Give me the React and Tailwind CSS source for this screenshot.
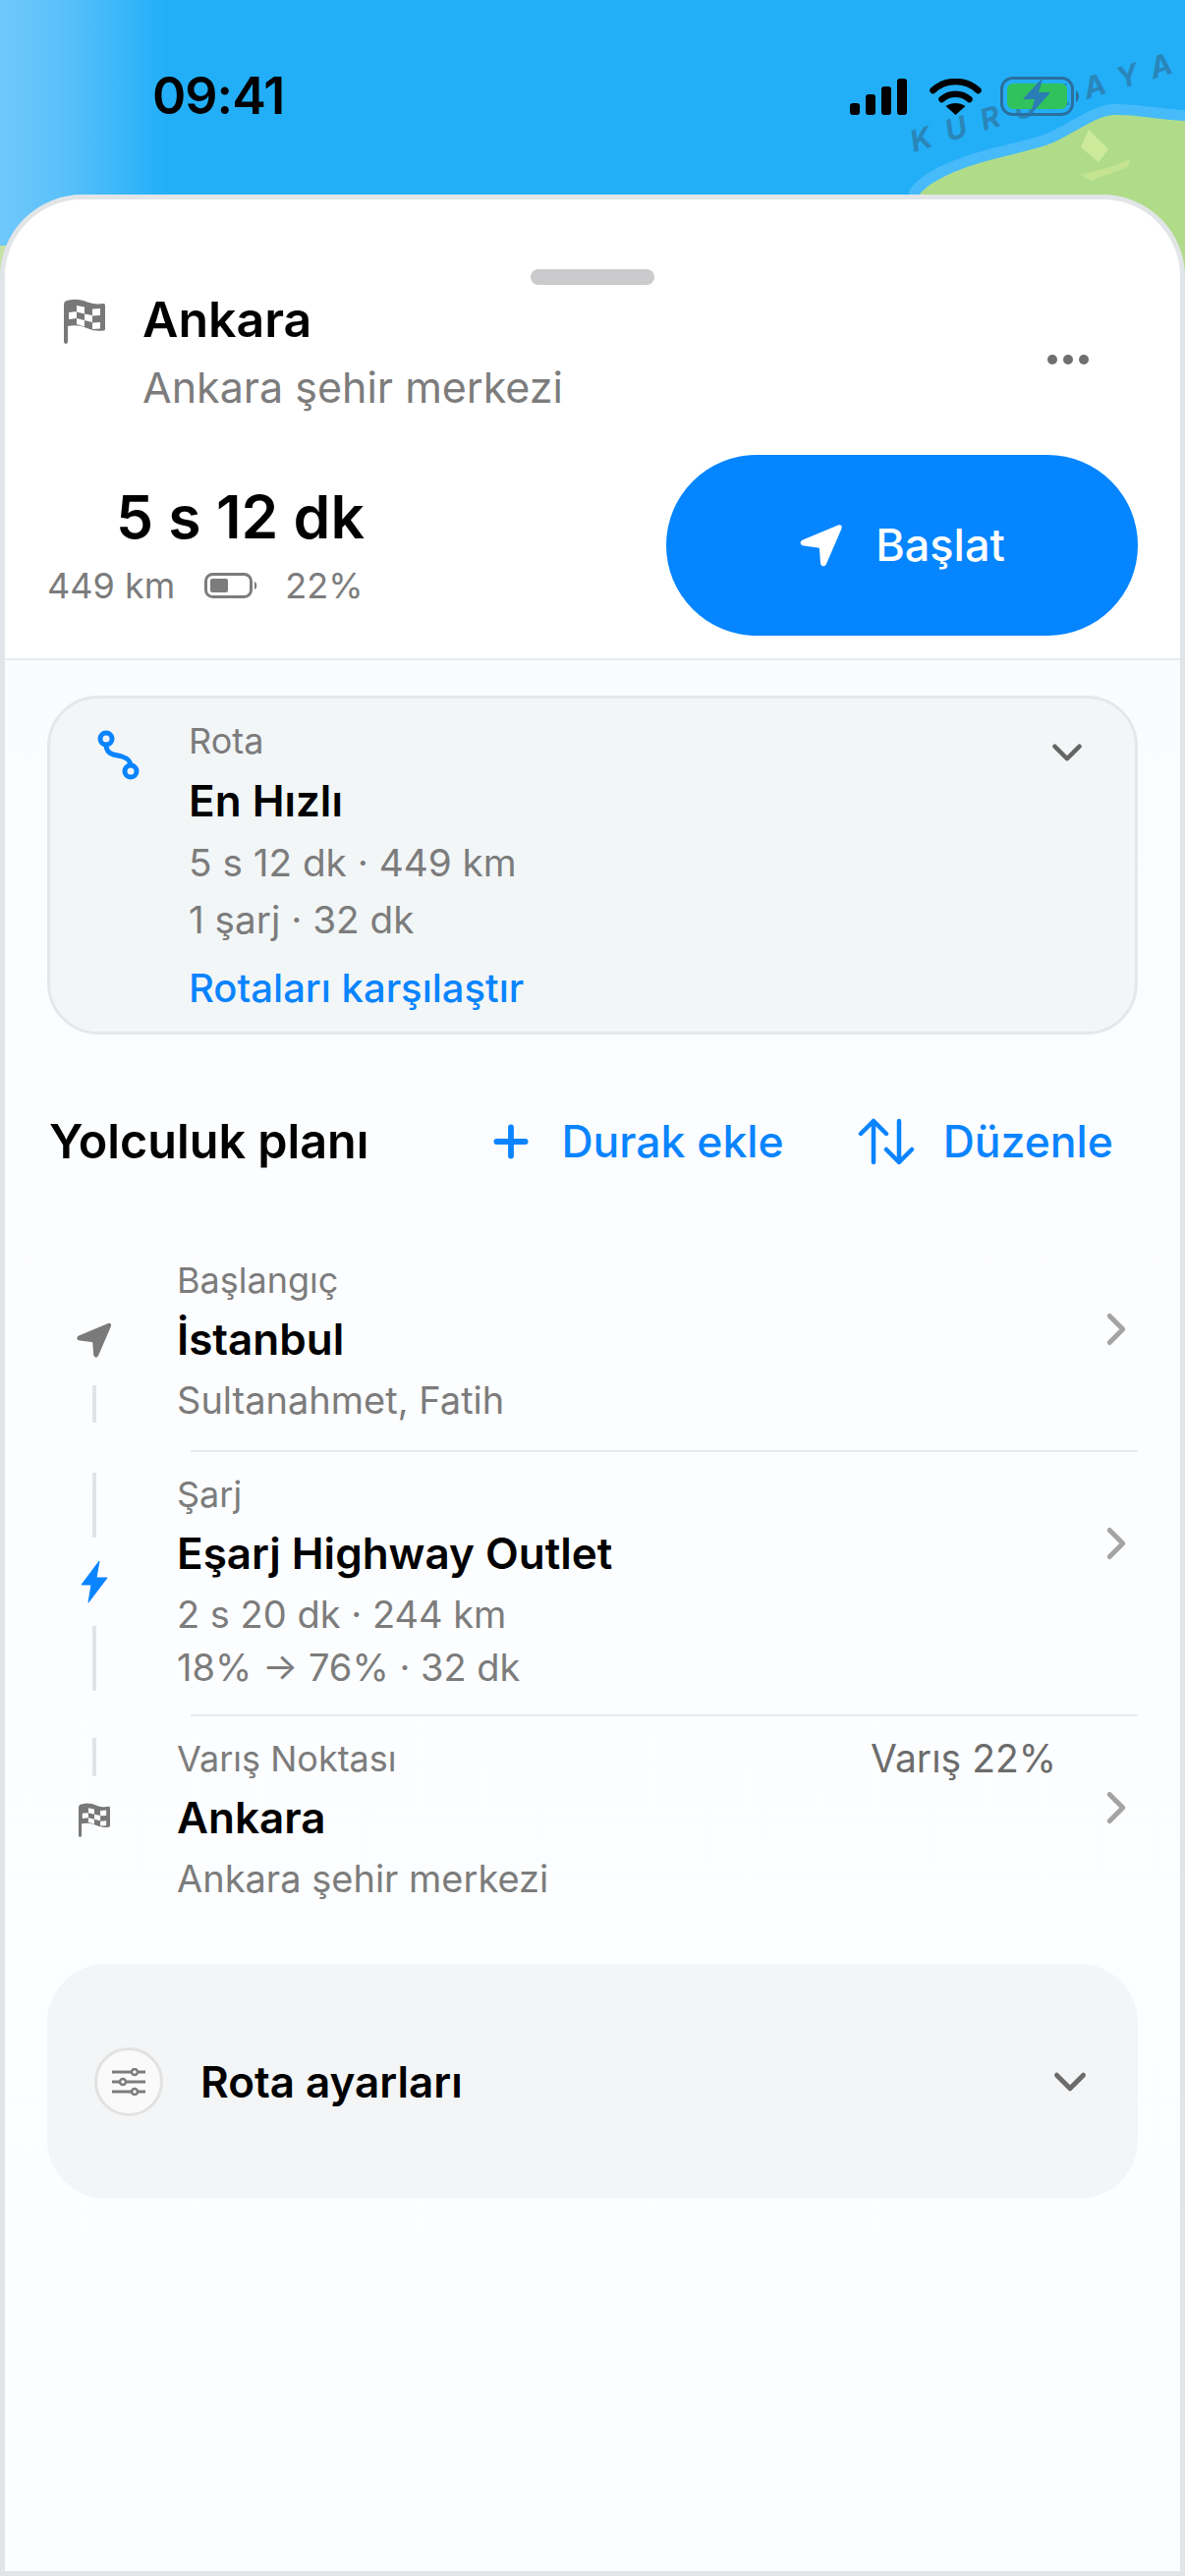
import React from "react";
import { Plus, ChevronDown, ChevronRight } from "lucide-react";

const NAV_ARROW = "M40 2.500C42.500 1.500 44.500 3.500 43.500 6L28 42c-1.500 3.500-5.500 3-6-1l-1-14c0-1-.5-1.500-1.500-1.500L5 23.500C1 23 .5 19 4 17.500Z";
const LAND = "M936 198C945 185 975 172 1000 165 1025 158 1050 153 1067 147 1090 138 1115 118 1133 117 1155 116 1180 122 1206 123V300H936Z";

// map behind the status bar
function MapBackdrop() {
  return (
    <svg className="absolute left-0 top-0" width="1206" height="300" viewBox="0 0 1206 300">
      <defs>
        <linearGradient id="shore" x1="0" x2="1" y1="0" y2="0">
          <stop offset="0" stopColor="#6fc8fb" />
          <stop offset="0.05" stopColor="#5cc1fa" />
          <stop offset="0.14" stopColor="#22aff8" />
          <stop offset="1" stopColor="#22aff8" />
        </linearGradient>
      </defs>
      <rect width="1206" height="300" fill="url(#shore)" />
      <path d={LAND} fill="none" stroke="#6cc8fb" strokeWidth="22" opacity="0.5" />
      <path d={LAND} fill="#b0dc8a" />
      <path d="M1108 132l20 20-10 13-18-15Z" fill="#cde99a" />
      <path d="M1100 178l10 6 38-14 2-8-20 8Z" fill="#c4e492" />
      <rect x="0" y="250" width="30" height="50" fill="#c5e2a4" />
      <text x="930" y="155" transform="rotate(-17 930 155)" fontFamily="Inter, sans-serif" fontSize="30" fontWeight="700" letterSpacing="15.500" fontStyle="italic" fill="#2c7fb0" opacity="0.85">KURUKAYA</text>
    </svg>
  );
}

function StatusBar() {
  return (
    <div className="relative h-[198px] flex items-start justify-between pl-[155px] pr-[106px] pt-[66px]">
      <span className="text-[52px] leading-[64px] font-semibold text-black tracking-[-1px]">09:41</span>
      <div className="flex items-center pt-[12px]">
        <svg width="58" height="37" viewBox="0 0 58 37">
          <rect x="0" y="25" width="10" height="12" rx="3" />
          <rect x="16" y="16" width="10" height="21" rx="3" />
          <rect x="32" y="8" width="10" height="29" rx="3" />
          <rect x="48" y="0" width="10" height="37" rx="3" />
        </svg>
        <svg width="55" height="37" viewBox="0 0 52 37" fill="none" className="ml-[22px]">
          <path d="M3 12C16 0 36 0 49 12" stroke="#000" strokeWidth="6.500" strokeLinecap="round" />
          <path d="M12 21c8-7 20-7 28 0" stroke="#000" strokeWidth="6.500" strokeLinecap="round" />
          <path d="M26 37 16 28c6-4 14-4 20 0Z" fill="#000" />
        </svg>
        <svg width="82" height="40" viewBox="0 0 82 40" fill="none" className="ml-[18px]">
          <rect x="1.500" y="1.500" width="72" height="37" rx="11" stroke="#2a6f9e" strokeWidth="3" />
          <rect x="7" y="7" width="61" height="26" rx="6" fill="#30c25c" />
          <path d="M77 14c4 2 4 10 0 12Z" fill="#2a6f9e" />
          <path d="M44 0 23 23h12l-5 17 21-24H39Z" fill="#2a7db4" />
        </svg>
      </div>
    </div>
  );
}

function FlagIcon({ width, height, className }) {
  return (
    <svg width={width} height={height} viewBox="0 0 42 46" className={className}>
      <path
        fillRule="evenodd"
        fill="#787878"
        d="M0 6C0 3 2 2 5 1.500 12 0 18 1 24 3.500c6 2 11 2.500 16 1.500 1.500-.2 2 .5 2 2v24c0 1-1 1.500-2 1.500-6 1-12-.5-18-3-6-2.500-12-3-18-1.500v15.500C4 45 3 46 2 46s-2-1-2-2.500ZM13 7l8 1.500v7l-8-2Zm16 3.500 8-.5v7l-8 .5ZM5 14l8-1v7l-8 1Zm16 1.500 8 1.500v7l-8-2ZM13 20l8 2v6.500l-8-2.500Zm16 4.500 8-.5v6.500l-8 .5Z"
      />
    </svg>
  );
}

function Dash({ className }) {
  return <div className={`w-[4px] bg-[#e2e3e5] ${className}`} />;
}

function Slot({ className, children }) {
  return <div className={`h-[50px] flex items-center justify-center ${className}`}>{children}</div>;
}

function RoutePoint({ label, title, lines, rail, extra, divider }) {
  return (
    <div className="flex">
      <div className="w-[96px] flex flex-col items-center shrink-0">{rail}</div>
      <div className="flex-1 flex flex-col pt-[18px]">
        <div className="flex pl-[36px]">
          <div className="flex-1">
            <div className="flex justify-between pr-[34px] text-[36px] leading-[50px] text-[#7c7c7c]">
              <span>{label}</span>
              {extra && <span className="text-[39px] text-[#6c6c6c]">{extra}</span>}
            </div>
            <div className="text-[44px] leading-[70px] font-semibold text-black">{title}</div>
            {lines.map((line) => (
              <div key={line} className="text-[38px] leading-[54px] text-[#7c7c7c]">{line}</div>
            ))}
          </div>
          <ChevronRight size={54} strokeWidth={2.200} color="#a4a4a4" className="mt-[48px] -mr-[5px] shrink-0" />
        </div>
        {divider}
      </div>
    </div>
  );
}

export default function App() {
  return (
    <div className="relative w-[1206px] h-[2622px] overflow-hidden flex flex-col font-['Inter',sans-serif]">
      <MapBackdrop />
      <StatusBar />

      <div className="relative flex-1 flex flex-col rounded-t-[84px] border-[5px] border-[#e2e5e7] bg-linear-to-b from-[#f8fcfc] via-[#fcfdff] to-[#fbfefe] overflow-hidden">
        <div className="bg-white border-b-2 border-[#e8ecee]">
          <div className="w-[126px] h-[16px] mx-auto mt-[71px] rounded-full bg-[#cbcbcd]" />
          <div className="flex items-start pl-[60px] pr-[93px] mt-[5px]">
            <FlagIcon width={42} height={46} className="mt-[9px]" />
            <div className="flex-1 ml-[38px]">
              <div className="text-[50px] leading-[60px] font-semibold text-black">Ankara</div>
              <div className="text-[43px] leading-[60px] mt-[9px] text-[#7c7c7c]">Ankara şehir merkezi</div>
            </div>
            <div className="flex gap-[6px] mt-[66px]">
              <span className="w-[10px] h-[10px] rounded-full bg-[#6f6f6f]" />
              <span className="w-[10px] h-[10px] rounded-full bg-[#6f6f6f]" />
              <span className="w-[10px] h-[10px] rounded-full bg-[#6f6f6f]" />
            </div>
          </div>
          <div className="flex items-center justify-between px-[43px] mt-[39px] pb-[23px]">
            <div className="pt-[6px]">
              <div className="pl-[70px] text-[60.600px] leading-[60px] font-semibold text-black">5 s 12 dk</div>
              <div className="flex items-center mt-[15px] text-[36px] leading-[50px] text-[#7c7c7c]">
                <span>449 km</span>
                <svg width="56" height="26" viewBox="0 0 56 26" fill="none" className="ml-[30px]">
                  <rect x="1.500" y="1.500" width="46" height="23" rx="7" stroke="#7c7c7c" strokeWidth="3" />
                  <rect x="6" y="6" width="18" height="14" rx="2" fill="#7c7c7c" />
                  <path d="M51 9c3 1 3 7 0 8Z" fill="#7c7c7c" />
                </svg>
                <span className="ml-[26px]">22%</span>
              </div>
            </div>
            <div className="w-[480px] h-[184px] rounded-[92px] bg-[#0585ff] flex items-center justify-center gap-[32px] text-white">
              <svg width="46" height="46" viewBox="0 0 46 46" fill="#fff"><path d={NAV_ARROW} /></svg>
              <span className="text-[45px] font-medium">Başlat</span>
            </div>
          </div>
        </div>

        <div className="px-[43px] pt-[36px]">
          <div className="relative flex rounded-[52px] border-[3px] border-[#e3e8ea] bg-[#f2f6f7] h-[345px] pl-[47px] pr-[44px] pt-[21px]">
            <svg width="45" height="53" viewBox="0 0 45 53" fill="none" stroke="#0a84ff" strokeWidth="5" className="mt-[10px] shrink-0">
              <circle cx="10" cy="10" r="6" />
              <path d="M10 16c0 11 10 10 16 12 6 2 9 5 9 9" strokeLinecap="round" />
              <circle cx="35" cy="43" r="6" />
            </svg>
            <div className="flex-1 ml-[49px]">
              <div className="text-[36px] leading-[44px] text-[#7c7c7c]">Rota</div>
              <div className="text-[44px] leading-[64px] mt-[7px] font-semibold text-black">En Hızlı</div>
              <div className="text-[38.700px] leading-[58px] mt-[2px] text-[#7c7c7c]">5 s 12 dk · 449 km</div>
              <div className="text-[38.700px] leading-[58px] text-[#7c7c7c]">1 şarj · 32 dk</div>
              <div className="text-[40px] leading-[56px] mt-[13px] font-medium text-[#0a84ff]">Rotaları karşılaştır</div>
            </div>
            <ChevronDown size={50} strokeWidth={2.200} color="#666" className="mt-[9px] shrink-0" />
          </div>

          <div className="flex items-center mt-[77px] h-[64px] pl-[2px]">
            <span className="text-[48.500px] font-semibold text-black">Yolculuk planı</span>
            <Plus size={50} strokeWidth={2.800} color="#0a84ff" className="ml-[120px]" />
            <span className="ml-[26px] text-[44.500px] font-medium text-[#0a84ff]">Durak ekle</span>
            <svg width="58" height="50" viewBox="0 0 58 50" fill="none" stroke="#0a84ff" strokeWidth="4.500" strokeLinecap="round" strokeLinejoin="round" className="ml-[75px]">
              <path d="M16 46V4M3 17 16 4l13 13" />
              <path d="M42 4v42M29 33l13 13 13-13" />
            </svg>
            <span className="ml-[29px] text-[44.500px] font-medium text-[#0a84ff]">Düzenle</span>
          </div>

          <div className="mt-[66px]">
            <RoutePoint
              label="Başlangıç"
              title="İstanbul"
              lines={["Sultanahmet, Fatih"]}
              divider={<div className="h-[2px] ml-[50px] mt-[24px] bg-[#e9eaec]" />}
              rail={
                <>
                  <Slot className="mt-[79px]"><svg width="38" height="38" viewBox="0 0 46 46" fill="#7a7a7a"><path d={NAV_ARROW} /></svg></Slot>
                  <Dash className="mt-[21px] h-[38px]" />
                </>
              }
            />
            <RoutePoint
              label="Şarj"
              title="Eşarj Highway Outlet"
              lines={["2 s 20 dk · 244 km", "18% → 76% · 32 dk"]}
              divider={<div className="h-[2px] ml-[50px] mt-[21px] bg-[#e9eaec]" />}
              rail={
                <>
                  <Dash className="mt-[21px] h-[66px]" />
                  <Slot className="mt-[20px]"><svg width="28" height="42" viewBox="0 0 28 42" fill="#0a84ff"><path d="M19 0 1 24h10L8 42l19-25H16Z" strokeLinejoin="round" stroke="#0a84ff" strokeWidth="1" /></svg></Slot>
                  <Dash className="mt-[20px] h-[66px]" />
                </>
              }
            />
            <RoutePoint
              label="Varış Noktası"
              extra="Varış 22%"
              title="Ankara"
              lines={["Ankara şehir merkezi"]}
              rail={
                <>
                  <Dash className="mt-[22px] h-[39px]" />
                  <Slot className="mt-[19px]"><FlagIcon width={32} height={35} /></Slot>
                </>
              }
            />
          </div>

          <div className="flex items-center h-[239px] mt-[60px] rounded-[60px] bg-[#f4f5f6] pl-[48px] pr-[42px]">
            <div className="w-[70px] h-[70px] rounded-full border-[3px] border-[#e2e2e2] bg-[#fafafa] flex items-center justify-center">
              <svg width="34" height="28" viewBox="0 0 34 28" fill="none" stroke="#7c7c7c" strokeWidth="3">
                <path d="M0 4h34M0 14h34M0 24h34" />
                <circle cx="23" cy="4" r="3" fill="#fafafa" strokeWidth="2.500" />
                <circle cx="11" cy="14" r="3" fill="#fafafa" strokeWidth="2.500" />
                <circle cx="23" cy="24" r="3" fill="#fafafa" strokeWidth="2.500" />
              </svg>
            </div>
            <span className="ml-[38px] flex-1 text-[44px] font-semibold text-black">Rota ayarları</span>
            <ChevronDown size={54} strokeWidth={2.200} color="#6c6c6c" />
          </div>
        </div>
      </div>
    </div>
  );
}
